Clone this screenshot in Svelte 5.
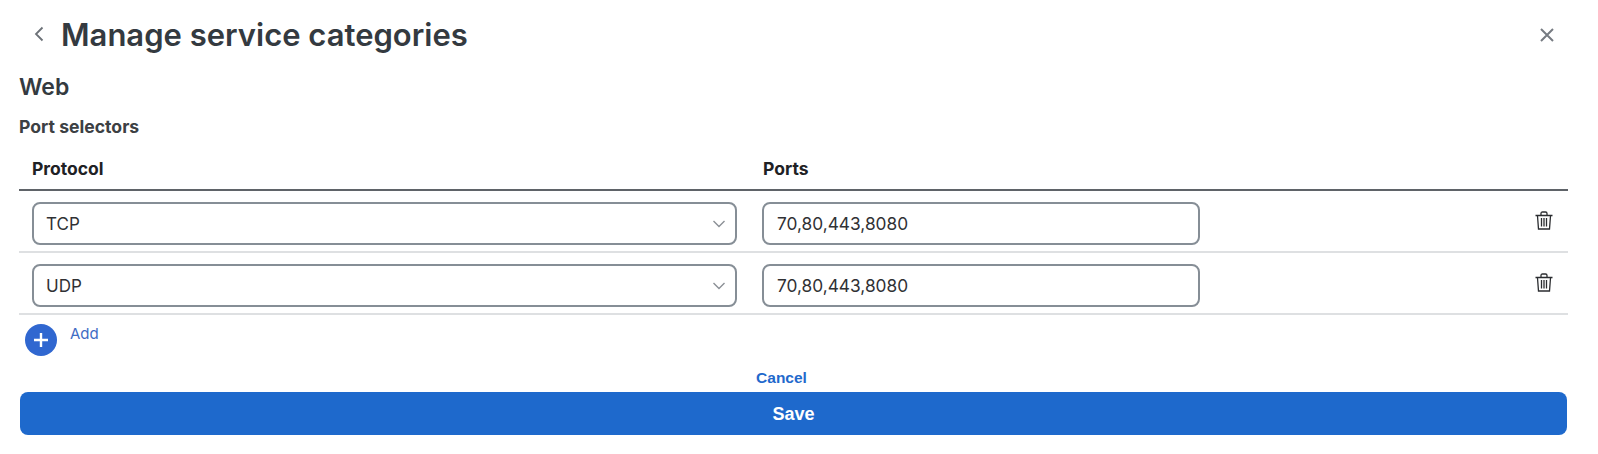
<script>
    const rows = [
        { protocol: "TCP", ports: "70,80,443,8080" },
        { protocol: "UDP", ports: "70,80,443,8080" }
    ];
</script>

<main>
    <header>
        <button class="back" aria-label="Back">
            <svg width="12" height="18" viewBox="0 0 12 18"><path d="M9.500 2.500 3 9l6.500 6.500" fill="none" stroke="#6c7177" stroke-width="1.800"/></svg>
        </button>
        <h1>Manage service categories</h1>
        <button class="close" aria-label="Close">
            <svg width="16" height="16" viewBox="0 0 16 16"><path d="M2 2l12 12M14 2 2 14" fill="none" stroke="#767b82" stroke-width="2"/></svg>
        </button>
    </header>

    <h2>Web</h2>
    <h3>Port selectors</h3>

    <div class="table-head">
        <div>Protocol</div>
        <div>Ports</div>
    </div>

    {#each rows as row}
        <div class="row">
            <div class="select-wrap">
                <select value={row.protocol}>
                    <option>TCP</option>
                    <option>UDP</option>
                </select>
                <svg class="chevron" width="14" height="8" viewBox="0 0 14 8"><path d="M1.500 1 7 6.500 12.500 1" fill="none" stroke="#8b9096" stroke-width="1.400"/></svg>
            </div>
            <input type="text" value={row.ports} />
            <button class="trash" aria-label="Delete">
                <svg width="18" height="19" viewBox="0 0 18 19" fill="none" stroke="#2b2d30" stroke-width="1.300">
                    <path d="M.5 4.500h17M6 4V2.500C6 1.500 6.500 1 7.500 1h3c1 0 1.500.5 1.500 1.500V4"/>
                    <path d="M2.500 5 3.500 18h11l1-13"/>
                    <path d="M6.500 7v8.500M9 7v8.500M11.500 7v8.500"/>
                </svg>
            </button>
        </div>
    {/each}

    <div class="add">
        <span class="add-icon">
            <svg width="16" height="16" viewBox="0 0 16 16"><path d="M8 1v14M1 8h14" stroke="#fff" stroke-width="2.400"/></svg>
        </span>
        <span class="add-label">Add</span>
    </div>

    <div class="actions">
        <a href="#cancel" class="cancel">Cancel</a>
        <button class="save">Save</button>
    </div>
</main>

<style>
    :global(body) {
        background: #fff;
    }

    main {
        box-sizing: border-box;
        width: 1598px;
        height: 454px;
        padding: 0 30px 0 19px;
        font-family: Inter, "Liberation Sans", sans-serif;
        color: #202124;
        overflow: hidden;
    }

    button {
        background: none;
        border: none;
        padding: 0;
        display: flex;
        font-family: inherit;
    }

    header {
        display: flex;
        align-items: center;
        height: 68px;
        padding-left: 14px;
    }

    h1 {
        margin: 0 0 0 16px;
        font-size: 31px;
        font-weight: 600;
        color: #343a40;
    }

    .close {
        margin-left: auto;
        margin-right: 13px;
        margin-top: 2px;
    }

    h2 {
        margin: 0;
        height: 38px;
        line-height: 38px;
        font-size: 23px;
        font-weight: 600;
        color: #343a40;
    }

    h3 {
        margin: 0;
        height: 42px;
        line-height: 42px;
        font-size: 17.600px;
        font-weight: 700;
        color: #3c4043;
    }

    .table-head {
        display: flex;
        align-items: center;
        height: 41px;
        padding: 0 0 0 13px;
        border-bottom: 2px solid #5f6368;
        font-size: 17.500px;
        font-weight: 700;
    }

    .table-head div:first-child {
        width: 731px;
    }

    .row {
        display: flex;
        align-items: flex-start;
        height: 49px;
        padding: 11px 15px 0 13px;
        border-bottom: 2px solid #dee0e2;
    }

    .select-wrap {
        position: relative;
        width: 705px;
        margin-right: 25px;
    }

    select,
    input {
        display: block;
        box-sizing: border-box;
        height: 43px;
        border: 2px solid #868e96;
        border-radius: 8px;
        padding: 0 12px;
        background: #fff;
        font-family: inherit;
        font-size: 17px;
        color: #303134;
        outline: none;
    }

    select {
        width: 100%;
        appearance: none;
    }

    input {
        width: 438px;
        padding-left: 13px;
        font-size: 17.300px;
    }

    .chevron {
        position: absolute;
        right: 11px;
        top: 18px;
    }

    .trash {
        margin-left: auto;
        margin-top: 9px;
    }

    .add {
        display: flex;
        align-items: flex-start;
        padding: 9px 0 0 6px;
        height: 54px;
        box-sizing: border-box;
    }

    .add-icon {
        display: flex;
        align-items: center;
        justify-content: center;
        width: 32px;
        height: 32px;
        border-radius: 50%;
        background: #3067d0;
    }

    .add-label {
        margin: 0 0 0 13px;
        font-size: 15px;
        color: #3f6cc4;
    }

    .actions {
        display: flex;
        flex-direction: column;
        align-items: center;
        padding: 0 1px;
    }

    .cancel {
        height: 18px;
        line-height: 18px;
        margin: 0 24px 5px 0;
        font-family: "Liberation Sans", sans-serif;
        font-size: 15.500px;
        font-weight: 700;
        color: #1f69cc;
        text-decoration: none;
    }

    .save {
        width: 100%;
        height: 43px;
        padding-top: 2px;
        align-items: center;
        justify-content: center;
        border-radius: 8px;
        background: #1e69cc;
        color: #fff;
        font-family: "Liberation Sans", sans-serif;
        font-size: 18px;
        font-weight: 700;
    }
</style>
